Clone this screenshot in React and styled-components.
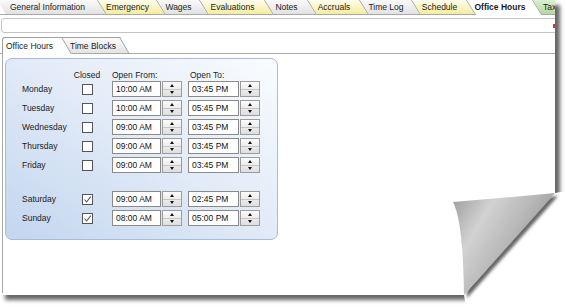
import React from "react";
import styled, { createGlobalStyle } from "styled-components";

const mainTabs = [
  { label: "General Information", w: 101, tone: "gray" },
  { label: "Emergency", w: 59, tone: "yellow" },
  { label: "Wages", w: 43, tone: "gray" },
  { label: "Evaluations", w: 65, tone: "yellow" },
  { label: "Notes", w: 43, tone: "gray" },
  { label: "Accruals", w: 52, tone: "yellow" },
  { label: "Time Log", w: 52, tone: "gray" },
  { label: "Schedule", w: 55, tone: "yellow" },
  { label: "Office Hours", w: 66, tone: "white", active: true },
  { label: "Tax", w: 40, tone: "green", left: true },
];

const days = [
  { day: "Monday", closed: false, from: "10:00 AM", to: "03:45 PM" },
  { day: "Tuesday", closed: false, from: "10:00 AM", to: "05:45 PM" },
  { day: "Wednesday", closed: false, from: "09:00 AM", to: "03:45 PM" },
  { day: "Thursday", closed: false, from: "09:00 AM", to: "03:45 PM" },
  { day: "Friday", closed: false, from: "09:00 AM", to: "03:45 PM" },
  { day: "Saturday", closed: true, from: "09:00 AM", to: "02:45 PM", spaced: true },
  { day: "Sunday", closed: true, from: "08:00 AM", to: "05:00 PM" },
];

const tabColors = {
  gray: "linear-gradient(#fafafa, #e2e2e2)",
  yellow: "linear-gradient(#fffdf0, #f6ec9c)",
  white: "#ffffff",
  green: "linear-gradient(#dcefd2, #b4d8a2)",
};

const TimeBox = ({ value, width }) => (
  <TimeInput $w={width}>
    <TimeText>{value}</TimeText>
    <Spinner>
      <SpinHalf $top>
        <ArrowUp />
      </SpinHalf>
      <SpinHalf>
        <ArrowDown />
      </SpinHalf>
    </Spinner>
  </TimeInput>
);

const App = () => {
  return (
    <>
      <GlobalStyle />
      <Stage>
        <Paper>
          <TabStrip>
            {mainTabs.map((t) => (
              <Tab
                key={t.label}
                $w={t.w}
                $tone={t.tone}
                $active={t.active}
                $left={t.left}
              >
                {t.label}
              </Tab>
            ))}
          </TabStrip>
          <FilterBox>
            <RedMark />
          </FilterBox>
          <SubTabStrip>
            <SubTab $active>Office Hours</SubTab>
            <SubTab>Time Blocks</SubTab>
          </SubTabStrip>
          <ContentPanel>
            <GroupBox>
              <HeaderRow>
                <span />
                <HeadCenter>Closed</HeadCenter>
                <HeadFrom>Open From:</HeadFrom>
                <HeadTo>Open To:</HeadTo>
              </HeaderRow>
              {days.map((d) => (
                <DayRow key={d.day} $spaced={d.spaced}>
                  <DayLabel>{d.day}</DayLabel>
                  <CheckBox>
                    {d.closed && (
                      <svg width="9" height="9" viewBox="0 0 9 9">
                        <polyline
                          points="1.5,4.5 3.6,7 7.8,1.6"
                          fill="none"
                          stroke="#555"
                          strokeWidth="1.1"
                        />
                      </svg>
                    )}
                  </CheckBox>
                  <FromCell>
                    <TimeBox value={d.from} width={70} />
                  </FromCell>
                  <TimeBox value={d.to} width={72} />
                </DayRow>
              ))}
            </GroupBox>
          </ContentPanel>
        </Paper>
        <CurlArt width="127" height="122" viewBox="0 0 127 122">
          <defs>
            <linearGradient id="curlShade" x1="0" y1="0" x2="1" y2="0.6">
              <stop offset="0" stopColor="#9a9a9a" />
              <stop offset="0.32" stopColor="#d2d2d2" />
              <stop offset="0.62" stopColor="#b6b6b6" />
              <stop offset="1" stopColor="#858585" />
            </linearGradient>
            <filter id="curlShadow" x="-30%" y="-30%" width="160%" height="160%">
              <feDropShadow dx="3" dy="3" stdDeviation="1.8" floodColor="#000" floodOpacity="0.6" />
            </filter>
          </defs>
          <path d="M13 17 Q64 13 115 8 L127 6 L127 122 L26 122 L24 110 Q23 35 13 17 Z" fill="#fff" />
          <path
            d="M13 17 Q64 13 115 8 L24 110 Q23 35 13 17 Z"
            fill="url(#curlShade)"
            filter="url(#curlShadow)"
          />
        </CurlArt>
      </Stage>
    </>
  );
};

export default App;

const GlobalStyle = createGlobalStyle`
  body {
    margin: 0;
    background: #fff;
    font-family: "Liberation Sans", Arial, sans-serif;
    color: #1b1b1b;
  }
`;

const Stage = styled.div`
  position: relative;
  width: 567px;
  height: 307px;
  overflow: hidden;
`;

const Paper = styled.div`
  width: 555px;
  height: 295px;
  background: #fff;
  box-shadow: 5px 5px 4px rgba(0, 0, 0, 0.6);
  overflow: hidden;
  display: flex;
  flex-direction: column;
  font-size: 8.5px;
`;

const TabStrip = styled.div`
  display: flex;
  align-items: flex-start;
  height: 14px;
  margin-left: -3px;
  border-bottom: 1px solid #a8a8a8;
  flex: none;
`;

const Tab = styled.div`
  position: relative;
  z-index: 0;
  flex: none;
  box-sizing: border-box;
  width: ${(p) => p.$w}px;
  height: ${(p) => (p.$active ? 15 : 14)}px;
  padding-left: ${(p) => (p.$left ? 10 : 0)}px;
  line-height: 14px;
  text-align: ${(p) => (p.$left ? "left" : "center")};
  white-space: nowrap;
  font-weight: ${(p) => (p.$active ? 700 : 400)};
  color: #1b1b1b;

  &::before {
    content: "";
    position: absolute;
    inset: 0;
    z-index: -1;
    background: ${(p) => tabColors[p.$tone]};
    border-right: 1px solid #9a9a9a;
    transform: skewX(32deg);
    transform-origin: top left;
  }
`;

const FilterBox = styled.div`
  flex: none;
  display: flex;
  align-items: center;
  justify-content: flex-end;
  height: 13px;
  margin: 3px -4px 0 1px;
  border: 1px solid #c4c4c4;
  border-radius: 3px;
`;

const RedMark = styled.span`
  width: 2px;
  height: 4px;
  margin-right: 3px;
  background: #e03030;
`;

const SubTabStrip = styled.div`
  flex: none;
  display: flex;
  align-items: flex-start;
  height: 16px;
  margin-top: 4px;
  padding-left: 2px;
  border-bottom: 1px solid #a8a8a8;
`;

const SubTab = styled.div`
  position: relative;
  z-index: ${(p) => (p.$active ? 2 : 1)};
  flex: none;
  box-sizing: border-box;
  width: ${(p) => (p.$active ? 59 : 58)}px;
  height: ${(p) => (p.$active ? 17 : 16)}px;
  padding-left: ${(p) => (p.$active ? 3 : 9)}px;
  line-height: 16px;
  white-space: nowrap;
  background: ${(p) => (p.$active ? "#fff" : "linear-gradient(#fbfbfb, #e4e4e4)")};
  border-top: 1px solid #a0a0a0;
  border-left: ${(p) => (p.$active ? "1px solid #a0a0a0" : "none")};
  border-top-left-radius: ${(p) => (p.$active ? 3 : 0)}px;

  &::after {
    content: "";
    position: absolute;
    z-index: -1;
    top: -1px;
    bottom: 0;
    left: calc(100% - 10px);
    width: 10px;
    background: ${(p) => (p.$active ? "#fff" : "linear-gradient(#fbfbfb, #e4e4e4)")};
    border-top: 1px solid #a0a0a0;
    border-right: 1px solid #a0a0a0;
    transform: skewX(30deg);
    transform-origin: top left;
  }
`;

const ContentPanel = styled.div`
  flex: 1;
  margin: 0 0 2px 2px;
  padding: 4px 0 0 2px;
  border-left: 1px solid #a8a8a8;
`;

const GroupBox = styled.div`
  box-sizing: border-box;
  width: 273px;
  height: 182px;
  padding: 10px 0 0 16px;
  border: 1px solid #a4bddc;
  border-radius: 7px;
  background: linear-gradient(to top right, #c2d6ef 0%, #e1eaf7 50%, #fafcfe 100%);
  display: flex;
  flex-direction: column;
  gap: 3px;
`;

const HeaderRow = styled.div`
  display: grid;
  grid-template-columns: 50px 30px 86px 73px;
  height: 9px;
  line-height: 12px;
  white-space: nowrap;
`;

const HeadCenter = styled.span`
  text-align: center;
`;

const HeadFrom = styled.span`
  padding-left: 10px;
`;

const HeadTo = styled.span`
  padding-left: 2px;
`;

const DayRow = styled.div`
  display: grid;
  grid-template-columns: 50px 30px 86px 73px;
  align-items: center;
  height: 16px;
  margin-top: ${(p) => (p.$spaced ? 15 : 0)}px;
`;

const DayLabel = styled.span`
  white-space: nowrap;
`;

const CheckBox = styled.span`
  justify-self: center;
  box-sizing: border-box;
  width: 11px;
  height: 11px;
  border: 1px solid #555;
  background: #fff;
  display: flex;
  align-items: center;
  justify-content: center;
`;

const FromCell = styled.div`
  padding-left: 10px;
`;

const TimeInput = styled.div`
  display: flex;
  gap: 1px;
  width: ${(p) => p.$w}px;
  height: 16px;
`;

const TimeText = styled.div`
  flex: 1;
  box-sizing: border-box;
  height: 16px;
  padding-left: 3px;
  line-height: 14px;
  border: 1px solid #8a8a8a;
  background: #fff;
  color: #111;
  white-space: nowrap;
`;

const Spinner = styled.div`
  flex: none;
  box-sizing: border-box;
  width: 20px;
  height: 16px;
  border: 1px solid #9c9c9c;
  background: linear-gradient(#fbfbfb, #dedede);
  display: flex;
  flex-direction: column;
`;

const SpinHalf = styled.div`
  flex: 1;
  display: flex;
  align-items: center;
  justify-content: center;
  border-bottom: ${(p) => (p.$top ? "1px solid #c6c6c6" : "none")};
`;

const ArrowUp = styled.span`
  width: 0;
  height: 0;
  border-left: 2.5px solid transparent;
  border-right: 2.5px solid transparent;
  border-bottom: 3px solid #111;
`;

const ArrowDown = styled.span`
  width: 0;
  height: 0;
  border-left: 2.5px solid transparent;
  border-right: 2.5px solid transparent;
  border-top: 3px solid #111;
`;

const CurlArt = styled.svg`
  position: absolute;
  left: 440px;
  top: 185px;
  overflow: visible;
`;
